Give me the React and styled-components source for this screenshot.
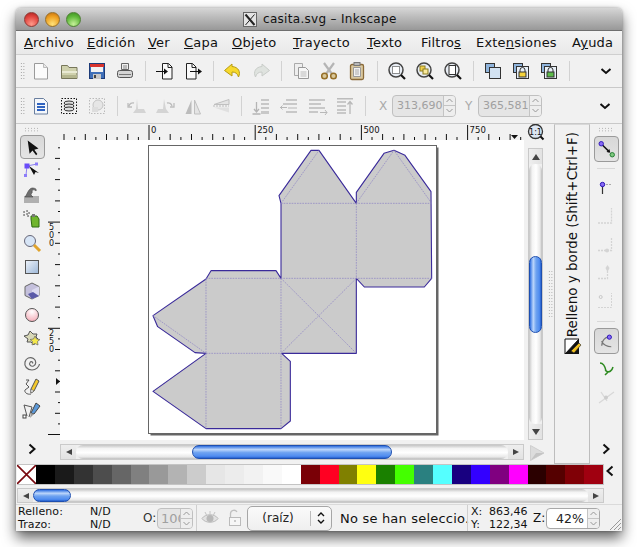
import React from 'react';
import styled, { createGlobalStyle } from 'styled-components';

const Global = createGlobalStyle`
  html, body { margin: 0; background: #fff; }
  body { font-family: "DejaVu Sans", sans-serif; color: #111; overflow: hidden; }
`;

const Page = styled.div`padding: 8px 0 0 16px; height: 547px; box-sizing: border-box;`;
const Win = styled.div`
  width: 606px; height: 523px; background: #f1f1f1; border-radius: 5px 5px 0 0;
  box-shadow: 0 7px 14px rgba(0,0,0,.62), 0 0 3px rgba(0,0,0,.35);
  display: flex; flex-direction: column; overflow: hidden;
`;
const TitleBar = styled.div`
  height: 23px; flex: none; position: relative; display: flex; align-items: center;
  background: linear-gradient(#d6d6d6, #bcbcbc 40%, #989898); border-bottom: 1px solid #6f6f6f; box-sizing: border-box;
`;
const Lights = styled.div`display: flex; gap: 6px; margin-left: 8px;`;
const Light = styled.div`
  width: 15px; height: 15px; border-radius: 50%;
  border: 1px solid ${p => p.$edge}; box-sizing: border-box;
  background: radial-gradient(circle at 50% 85%, ${p => p.$glow}, ${p => p.$c} 60%, ${p => p.$dark});
`;
const TitleBox = styled.div`
  display: flex; align-items: center; gap: 6px; margin-left: 162px;
  font-size: 12px; letter-spacing: .3px; color: #111;
`;
const MenuBar = styled.div`
  height: 24px; flex: none; box-sizing: border-box; display: flex; align-items: center; padding-left: 8px;
  font-size: 13px; letter-spacing: .2px; background: linear-gradient(#f4f4f4, #e9e9e9); border-bottom: 1px solid #cfcfcf;
`;
const MenuItem = styled.span`white-space: nowrap; width: ${p => p.$w}px; flex: none;`;
const Ul = styled.span`text-decoration: underline;`;
const ToolRow = styled.div`
  height: ${p => p.$h}px; flex: none; box-sizing: border-box; display: flex; align-items: center;
  border-bottom: 1px solid #c9c9c9; position: relative;
`;
const Grip = styled.div`
  width: 5px; height: 18px; margin: 0 2px 0 4px;
  background-image: radial-gradient(#999 .6px, transparent .8px); background-size: 2.6px 3px; flex: none;
`;
const TBtn = styled.div`
  width: 28px; height: 26px; display: flex; align-items: center; justify-content: center; flex: none;
`;
const VSep = styled.div`width: 1px; height: 20px; background: #d2d2d2; margin: 0 5px 0 6px; flex: none;`;
const Chevron = styled.div`
  position: absolute; right: ${p => p.$r}px; top: 50%; transform: translateY(-50%); display: flex;
`;
const FieldLabel = styled.span`font-size: 12px; color: #aaa; width: ${p => p.$w}px; flex: none; margin-left: ${p => p.$ml || 0}px;`;
const Spin = styled.div`
  height: ${p => p.$h}px; width: ${p => p.$w}px; box-sizing: border-box; flex: none; display: flex;
  border: 1px solid ${p => p.$on ? '#a8a8a8' : '#c0c0c0'}; border-radius: 4px; overflow: hidden;
  background: ${p => p.$on ? '#fff' : '#e5e5e5'};
  color: ${p => p.$on ? '#222' : '#a0a0a0'}; font-size: ${p => p.$fs}px;
`;
const SpinText = styled.div`flex: 1; min-width: 0; display: flex; align-items: center; padding-left: ${p => p.$pad}px; overflow: hidden; white-space: nowrap;`;
const SpinBtns = styled.div`width: 11px; flex: none; border-left: 1px solid #c4c4c4; display: flex; flex-direction: column; background: #eee;`;
const SpinBtn = styled.div`flex: 1; display: flex; align-items: center; justify-content: center; & + & { border-top: 1px solid #c4c4c4; }`;

const Main = styled.div`display: grid; grid-template-columns: 32px 506px 36px 32px; height: 340px; flex: none;`;
const SideBar = styled.div`display: flex; flex-direction: column; align-items: center; position: relative;`;
const TopGrip = styled.div`
  width: 16px; height: 5px; margin-top: 3px;
  background-image: radial-gradient(#aaa .6px, transparent .8px); background-size: 3px 2.6px; flex: none;
`;
const SideBtn = styled.div`
  width: 25px; height: ${p => p.$h || 24}px; flex: none; box-sizing: border-box; display: flex; align-items: center; justify-content: center;
  ${p => p.$active ? 'background: linear-gradient(#d8d8d8,#e4e4e4); border: 1px solid #9a9a9a; border-radius: 4px;' : ''}
`;
const HLine = styled.div`width: 18px; height: 1px; background: #d8d8d8; flex: none;`;
const Spacer = styled.div`flex: ${p => p.$h ? 'none' : 1}; height: ${p => p.$h ? p.$h + 'px' : 'auto'};`;
const Center = styled.div`display: grid; grid-template-columns: 12px 464px 30px; grid-template-rows: 16px 300px 24px;`;
const RulerCorner = styled.div``;
const ZoomCell = styled.div`display: flex; justify-content: flex-start; padding-left: 3px; align-items: center;`;
const Canvas = styled.div`background: #fff; overflow: hidden; display: flex;`;
const VCell = styled.div`padding: 8px 0 0 4px; display: flex; position: relative;`;
const VHandle = styled.div`
  position: absolute; right: 1px; top: 130px; width: 5px; height: 47px;
  background-image: radial-gradient(#aaa .6px, transparent .8px); background-size: 2.6px 3px;
`;
const ScrollV = styled.div`width: 15px; height: 292px; box-sizing: border-box; border: 1px solid #c9c9c9; display: flex; flex-direction: column; background: #efefef;`;
const ScrollH = styled.div`width: ${p => p.$w}px; height: ${p => p.$h || 16}px; box-sizing: border-box; border: 1px solid #cacaca; display: flex; background: #efefef; flex: none;`;
const Arrow = styled.div`width: 15px; height: 100%; flex: none; display: flex; align-items: center; justify-content: center; color: #444;
  background: linear-gradient(#eee,#e2e2e2);`;
const ArrowV = styled(Arrow)`width: 100%; height: 15px; background: linear-gradient(90deg,#eee,#e2e2e2);`;
const TrackH = styled.div`flex: 1; border-radius: 8px; display: flex; background: linear-gradient(#c4c4c4, #f4f4f4 25%, #fff 55%, #e8e8e8 85%, #bdbdbd);`;
const TrackV = styled.div`flex: 1; border-radius: 8px; display: flex; flex-direction: column; background: linear-gradient(90deg,#c4c4c4, #f4f4f4 25%, #fff 55%, #e8e8e8 85%, #bdbdbd);`;
const ThumbH = styled.div`
  width: ${p => p.$size}px; margin-left: ${p => p.$start}px; border-radius: 8px; border: 1px solid #1e4fb0; box-sizing: border-box;
  background: linear-gradient(#2f6fe0, #bcd6fb 30%, #6fa3f0 55%, #4f8cf0 85%, #2660cc);
`;
const ThumbV = styled.div`
  height: ${p => p.$size}px; margin-top: ${p => p.$start}px; border-radius: 8px; border: 1px solid #1e4fb0; box-sizing: border-box;
  background: linear-gradient(90deg,#2f6fe0, #bcd6fb 30%, #6fa3f0 55%, #4f8cf0 85%, #2660cc);
`;
const HCell = styled.div`grid-column: 2 / 4; display: flex; align-items: flex-start; padding-top: 4px; gap: 5px;`;
const LeftFill = styled.div``;
const Dock = styled.div`
  border-left: 1px solid #bdbdbd; border-right: 1px solid #bdbdbd; border-top: 1px solid #d8d8d8; border-bottom: 1px solid #bdbdbd;
  display: flex; flex-direction: column; align-items: center; padding-top: 7px; box-sizing: border-box;
`;
const DockLabel = styled.div`
  writing-mode: vertical-rl; transform: rotate(180deg); font-size: 13.5px; white-space: nowrap; color: #111; line-height: 18px; margin-bottom: 1px;
`;
const DockIcon = styled.div`display: flex; margin-left: 2px;`;
const PaletteRow = styled.div`display: flex; height: 21px; flex: none; padding-left: 1px;`;
const Palette = styled.div`display: flex; width: 587px; height: 21px; box-sizing: border-box; border: 1px solid #c4c4c4; border-left: 0; flex: none;`;
const NoColor = styled.div`width: 19px; flex: none; display: flex;`;
const Swatch = styled.div`flex: 1; background: ${p => p.$c};`;
const PalScrollRow = styled.div`padding: 3px 0 1px 1px; flex: none; display: flex;`;
const Status = styled.div`flex: 1; display: flex; align-items: center; position: relative; border-top: 1px solid #dadada; font-size: 11px;`;
const FillBox = styled.div`width: 127px; flex: none; padding-left: 2px; display: grid; grid-template-columns: 72px auto; line-height: 13px; letter-spacing: .1px; box-sizing: border-box;`;
const OLabel = styled.span`font-size: 12px; color: #333; width: 14px; flex: none;`;
const StatusSep = styled.div`width: 1px; height: 26px; background: #cfcfcf; flex: none; margin: ${p => p.$m};`;
const IconSlot = styled.div`display: flex; margin-right: ${p => p.$mr}px; flex: none;`;
const Combo = styled.div`
  width: 85px; height: 25px; flex: none; box-sizing: border-box; border: 1px solid #a6a6a6; border-radius: 5px; display: flex; align-items: center;
  background: linear-gradient(#fafafa,#efefef); font-size: 12px; color: #222;
`;
const ComboText = styled.div`flex: 1; text-align: center; padding-right: 2px;`;
const ComboBtn = styled.div`width: 20px; height: 15px; border-left: 1px solid #bbb; display: flex; align-items: center; justify-content: center;`;
const StatusMsg = styled.div`font-size: 13px; letter-spacing: .2px; margin-left: 8px; width: 127px; white-space: nowrap; flex: none;`;
const Coords = styled.div`display: grid; grid-template-columns: 18px 42px; line-height: 13px; font-size: 11px; width: 60px; margin-left: 3px; flex: none;`;
const ZLabel = styled.span`font-size: 12px; margin-left: 2px; width: 13px; flex: none;`;
const ResizeGrip = styled.div`position: absolute; right: 1px; bottom: 1px; display: flex;`;

/* ---------- drawings ---------- */
const S = ({ children, w = 24, h = 24, vb, o }) => (
  <svg width={w} height={h} viewBox={vb || `0 0 ${w} ${h}`} opacity={o} style={{ display: 'block' }}>{children}</svg>
);
const I = {
  new: <S><path d="M5.5 4.500h9l4 4v11.500h-13z" fill="#fbfbfb" stroke="#9a9a9a" strokeLinejoin="round"/><path d="M14.500 4.500v4h4" fill="#e8e8e8" stroke="#bbb"/></S>,
  open: <S><path d="M4.500 6.500h6l1.500 2h8v11h-15.500z" fill="#cfd1ad" stroke="#77775a"/><rect x="5" y="12" width="15" height="2" fill="#e9ead3"/><rect x="5" y="16" width="15" height="3" fill="#b4b68e"/></S>,
  save: <S><rect x="4.500" y="4.500" width="15" height="15" fill="#3f6fb8" stroke="#1d3b78"/><rect x="5" y="5" width="14" height="3" fill="#d8332e"/><rect x="6" y="8" width="12" height="5" fill="#f2f2f2"/><rect x="8" y="15" width="8" height="5" fill="#c8c8c8"/><rect x="9" y="16" width="2" height="3" fill="#444"/></S>,
  print: <S><path d="M8.500 4.500h7v6h-7z" fill="#eee" stroke="#666"/><path d="M10 7h4M10 9h4" stroke="#888"/><rect x="4.500" y="11.500" width="15" height="7" rx="2" fill="#d4d4d4" stroke="#555"/><path d="M6 15.500h12" stroke="#777"/></S>,
  imp: <S><path d="M9.500 4.500h6l3.500 3.500v12h-9.500z" fill="#fafafa" stroke="#222"/><path d="M15 4.500v4h4" fill="none" stroke="#222"/><path d="M3 12.500h11" stroke="#111" strokeWidth="1.200"/><path d="M11 9.500l4 3-4 3z" fill="#111"/></S>,
  exp: <S><path d="M5.500 4.500h6l3.500 3.500v12h-9.500z" fill="#fafafa" stroke="#222"/><path d="M11 4.500v4h4" fill="none" stroke="#222"/><path d="M9 12.500h10" stroke="#111" strokeWidth="1.200"/><path d="M17 9.500l4 3-4 3z" fill="#111"/></S>,
  undo: <S><path d="M11 5L3.500 11.500 11 17v-4c3.500 0 5.500 1.500 6.500 5 2.500-5 0-10-6.500-10.500z" fill="#f7d92c" stroke="#b79c12" strokeLinejoin="round"/></S>,
  redo: <S><path d="M13 5l7.500 6.500L13 17v-4c-3.500 0-5.500 1.500-6.500 5-2.500-5 0-10 6.500-10.500z" fill="#dfe3df" stroke="#c8ccc8" strokeLinejoin="round"/></S>,
  dup: <S><path d="M5.500 4.500h8v12h-8z" fill="#eee" stroke="#aaa"/><path d="M9.500 8.500h7l3 3v8h-10z" fill="#f6f6f6" stroke="#999"/><path d="M11.500 13h6M11.500 15h6M11.500 17h6" stroke="#bbb"/></S>,
  cut: <S><path d="M7 4l8 11M17 4L9 15" stroke="#b5b5b5" strokeWidth="2.200"/><circle cx="7.500" cy="17" r="2.800" fill="#d9c89a" stroke="#96702a" strokeWidth="1.500"/><circle cx="16.500" cy="17" r="2.800" fill="#d9c89a" stroke="#96702a" strokeWidth="1.500"/></S>,
  paste: <S><rect x="5.500" y="5.500" width="13" height="15" rx="1.500" fill="#d9c8a0" stroke="#8a6a38" strokeWidth="1.300"/><rect x="9" y="3.500" width="6" height="3" fill="#b8b8b8" stroke="#777"/><path d="M8.500 8.500h7v9h-7z" fill="#f2f2f2" stroke="#999"/><path d="M10 11h4M10 13h4M10 15h4" stroke="#aaa"/></S>,
  zoomSel: <S><circle cx="11" cy="11" r="7" fill="#e9eef5" stroke="#444" strokeWidth="1.500"/><rect x="7.500" y="7.500" width="7" height="7" fill="#fff" stroke="#222" strokeDasharray="1 1"/><path d="M16 16l4 4" stroke="#111" strokeWidth="2.200"/></S>,
  zoomDraw: <S><circle cx="11" cy="11" r="7" fill="#e9eef5" stroke="#444" strokeWidth="1.500"/><rect x="7" y="7" width="5" height="5" fill="#f3d24c" stroke="#8a7a20"/><rect x="10" y="10" width="5" height="5" fill="#f9ea9c" stroke="#8a7a20"/><path d="M16 16l4 4" stroke="#111" strokeWidth="2.200"/></S>,
  zoomPage: <S><circle cx="11" cy="11" r="7" fill="#e9eef5" stroke="#444" strokeWidth="1.500"/><rect x="8" y="6.500" width="6.500" height="9" fill="#fff" stroke="#333"/><path d="M16 16l4 4" stroke="#111" strokeWidth="2.200"/></S>,
  layer: <S><rect x="4.500" y="4.500" width="9" height="9" fill="#8fb4dc" stroke="#333"/><rect x="8.500" y="8.500" width="11" height="11" fill="#d2e2f2" stroke="#333"/></S>,
  lockY: <S><rect x="4.500" y="4.500" width="9" height="9" fill="#8fb4dc" stroke="#333"/><rect x="7.500" y="7.500" width="12" height="12" fill="#e8f0f8" stroke="#333"/><path d="M11 13v-2a2.500 2.500 0 015 0v2" fill="none" stroke="#333"/><rect x="10" y="13" width="7" height="5" fill="#f4d23a" stroke="#333"/></S>,
  lockG: <S><rect x="4.500" y="4.500" width="9" height="9" fill="#8fb4dc" stroke="#333"/><rect x="7.500" y="7.500" width="12" height="12" fill="#e8f0f8" stroke="#333"/><path d="M11 13v-2a2.500 2.500 0 015 0v2" fill="none" stroke="#333"/><rect x="10" y="13" width="7" height="5" fill="#5dbb4a" stroke="#333"/></S>,
  chev: <S w={16} h={16}><path d="M3.500 6l4.500 4 4.500-4" fill="none" stroke="#111" strokeWidth="2"/></S>,
  chevR: <S w={12} h={14}><path d="M3.500 2.500l5 4.500-5 4.500" fill="none" stroke="#111" strokeWidth="2"/></S>,
  chevL: <S w={12} h={14}><path d="M8.500 2.500l-5 4.500 5 4.500" fill="none" stroke="#111" strokeWidth="2"/></S>,
  doc: <S><path d="M5.500 4.500h9l4 4v11.500h-13z" fill="#f4f7fb" stroke="#6a7f9f"/><path d="M8 9h8v2H8zM8 12h8v2H8zM8 15h8v2H8z" fill="#2f63c0"/></S>,
  selAll: <S><rect x="4.500" y="4.500" width="15" height="15" fill="none" stroke="#111" strokeDasharray="1.500 1.500"/><ellipse cx="12" cy="9" rx="5" ry="2" fill="#ddd" stroke="#333"/><ellipse cx="12" cy="12" rx="5" ry="2" fill="#ddd" stroke="#333"/><ellipse cx="12" cy="15" rx="5" ry="2" fill="#ddd" stroke="#333"/></S>,
  selFade: <S><rect x="4.500" y="4.500" width="15" height="15" fill="none" stroke="#bbb" strokeDasharray="1.500 1.500"/><circle cx="13" cy="11" r="5" fill="#e6e6e6" stroke="#c4c4c4"/><rect x="7" y="13" width="6" height="5" fill="#ddd"/></S>,
  rotL: <S><path d="M12 5l1 10h6l2 4H8l3-4z" fill="#d4d4d4"/><path d="M9 9a4 4 0 00-5 3M3 9v4h4" fill="none" stroke="#bdbdbd" strokeWidth="1.300"/></S>,
  rotR: <S><path d="M11 5l-1 10H5l-2 4h13l-3-4z" fill="#d4d4d4"/><path d="M14 9a4 4 0 015 3M21 9v4h-4" fill="none" stroke="#bdbdbd" strokeWidth="1.300"/></S>,
  flipH: <S><path d="M10.500 6v14H4.500z" fill="#bcbcbc"/><path d="M13.500 6v14h6z" fill="#e4e4e4" stroke="#c0c0c0"/></S>,
  flipV: <S><path d="M20 5.500v5H5z" fill="#e4e4e4" stroke="#c0c0c0"/><path d="M20 18.500v-5H5z" fill="#e0e0e0"/><path d="M4 12h16" stroke="#bbb" strokeDasharray="2 1"/></S>,
  al1: <S><path d="M3.500 20h8M7.500 8v10M5 15l2.500 3 2.500-3" fill="none" stroke="#b4b4b4" strokeWidth="1.300"/><path d="M12 5h8v2h-8zM12 9h8v2h-8zM12 13h8v2h-8zM12 17h8v3h-8z" fill="#c8c8c8"/></S>,
  al2: <S><path d="M9 5h11v2H9zM6 9h14v2H6zM9 17h11v2H9z" fill="#c8c8c8"/><path d="M3 13.500h7M5.500 11.500l-2 2 2 2" fill="none" stroke="#b8b8b8"/><path d="M11 13h9v2h-9z" fill="#d4d4d4"/></S>,
  al3: <S><path d="M4 5h16v2H4zM4 9h12v2H4zM4 13h16v2H4zM4 17h9v2H4z" fill="#c8c8c8"/><path d="M15 18.500h7M20 16l2 2.500-2 2.500" fill="none" stroke="#b8b8b8"/></S>,
  al4: <S><path d="M4 4h16v1.500H4z" fill="#bcbcbc"/><path d="M4 7h9v2H4zM4 11h9v2H4zM4 15h9v2H4zM4 18h9v2H4z" fill="#c8c8c8"/><path d="M17 20V8M14.500 10.500L17 7.500l2.500 3" fill="none" stroke="#b8b8b8" strokeWidth="1.300"/></S>,
  arrow: <S><path d="M8 4.500v14l3.500-3 3 5.500 1.500-1-2.500-5 4.500-.5z" fill="#111" transform="rotate(-8 12 12)"/></S>,
  node: <S><path d="M7 7l10-2M7 7l-1 9" stroke="#8d82f0" fill="none"/><rect x="4.500" y="4.500" width="5" height="5" fill="#6a4dfa"/><rect x="15" y="3.500" width="3" height="3" fill="#8d7dfa"/><rect x="4" y="15" width="3" height="3" fill="#8d7dfa"/><path d="M9 7l5 9 1.500-3 3.500 1z" fill="#111"/></S>,
  tweak: <S><rect x="4" y="13" width="15" height="7" fill="#b0b0b0"/><path d="M5 14c2-2 3-8 7-9 3 0 5 1 4 3-1-1-3-2-4 0 1 2-1 2-1 4l2 2z" fill="#6e6e6e" stroke="#444" strokeWidth=".6"/></S>,
  spray: <S><path d="M11 9h6l2 3v8h-7l-1-8z" fill="#6fb52c" stroke="#2f6a10"/><rect x="12" y="7" width="3" height="3" fill="#777"/><path d="M4 5h.1M7 4h.1M4 8h.1M7 7h.1M9 6h.1M8 9h.1" stroke="#333" strokeWidth="1.500" strokeLinecap="round"/></S>,
  zoomT: <S><circle cx="10" cy="10" r="5.500" fill="#d7e5f6" stroke="#667"/><path d="M14 14l6 6" stroke="#e0a32c" strokeWidth="3"/></S>,
  rect: <S><defs><linearGradient id="gr" x1="0" y1="0" x2="1" y2="1"><stop offset="0" stopColor="#eef3fa"/><stop offset="1" stopColor="#9cb7d8"/></linearGradient></defs><rect x="5.500" y="5.500" width="13" height="13" fill="url(#gr)" stroke="#555"/></S>,
  box: <S><path d="M12 4l7 3.500v9L12 20l-7-3.500v-9z" fill="#c4c0dc" stroke="#666"/><path d="M12 11l7-3.500v9L12 20z" fill="#dcdaf0"/><path d="M8 15l5-2 6 4-7 3z" fill="#5a5aa8"/></S>,
  circle: <S><defs><radialGradient id="gc" cx=".5" cy=".25" r=".8"><stop offset="0" stopColor="#fff"/><stop offset="1" stopColor="#f4a8b4"/></radialGradient></defs><circle cx="12" cy="12" r="6.500" fill="url(#gc)" stroke="#555"/></S>,
  star: <S><path d="M10 4l3 3 4 0-1 3 3 3-4 1-1 4-3-3-4 0 1-3-4-3 4-1z" fill="#d8d8b8" stroke="#555"/><path d="M15 9l1.500 3 3.500.5-2.500 2 .5 3.500-3-1.500-3 1.500.5-3.500-2.500-2 3.500-.5z" fill="#f4e84a" stroke="#666" strokeWidth=".7"/></S>,
  spiral: <S><path d="M12.500 12.500c1-1.500-1.500-2.500-2.500-1-1.500 2 1 4.500 3.500 3.500 3-1.500 3-5.500 0-7.500C10 5.500 6 7 5 11c-1 4 2 8 7 8 4 0 7-3 7.500-6" fill="none" stroke="#666" strokeWidth="1.200"/></S>,
  pencil: <S><path d="M6 5l3 0-3 4 3 3-4 3c-1 2 2 5 6 4" fill="none" stroke="#555"/><path d="M16 4l3 2-5 10-3 2 0-4z" fill="#f4c92c" stroke="#555"/><path d="M11 14l3 2-3 2z" fill="#fff" stroke="#555" strokeWidth=".6"/></S>,
  pen: <S><path d="M4 6l8 2-3 10M4 6l3 11" fill="none" stroke="#555"/><rect x="3" y="16" width="3" height="3" fill="#fff" stroke="#444"/><path d="M16 4l4 3-6 8-3-1z" fill="#5b98d8" stroke="#444"/><path d="M11 14l3 1-4 4z" fill="#999"/></S>,
  snap: <S><path d="M8 8l7 7" stroke="#111" strokeWidth="1.500"/><path d="M16 16l-4-1 3-3z" fill="#111"/><circle cx="6.500" cy="6.500" r="2.300" fill="#8a6cf5" stroke="#2b15b8"/><circle cx="18" cy="18" r="2.300" fill="#7ec87e" stroke="#1f7a2f"/></S>,
  snap2: <S><path d="M9 9.500h9" stroke="#aaa" strokeDasharray="2 1"/><path d="M8.500 11v8" stroke="#333" strokeWidth="1.200"/><circle cx="8.500" cy="9.500" r="2.200" fill="#8a6cf5" stroke="#2b15b8"/></S>,
  s3: <S><path d="M4 19h13.500V4" fill="none" stroke="#d4d4d4" strokeDasharray="2 1" strokeWidth="1.300"/></S>,
  s4: <S><path d="M4 16.500h13.500V4" fill="none" stroke="#d4d4d4" strokeDasharray="2 1" strokeWidth="1.300"/><circle cx="13" cy="16.500" r="2" fill="#d4d4d4"/></S>,
  s5: <S><path d="M4 16.500h9.500V6" fill="none" stroke="#d4d4d4" strokeDasharray="2 1" strokeWidth="1.300"/><path d="M13.500 3l2 3-2 4-2-4z" fill="#d4d4d4"/></S>,
  s6: <S><path d="M4 17.500h13.500V3" fill="none" stroke="#d4d4d4" strokeDasharray="2 1"/><circle cx="6.700" cy="7" r="1.500" fill="none" stroke="#c8c8c8"/></S>,
  curve: <S><path d="M7 17c0-6 4-9 7-9M7 12c1 4 6 6 10 6" fill="none" stroke="#777" strokeWidth="1.300"/><circle cx="15" cy="8" r="2.200" fill="#8a6cf5" stroke="#2b15b8"/></S>,
  green: <S><path d="M6 6c3 0 5 3 6 8 3 2 6 0 7-4M11 18l3-3-3-2" fill="none" stroke="#2d8a20" strokeWidth="1.500"/></S>,
  cross: <S><path d="M5 18L20 7M7 7l6 9" stroke="#d8d8d8" strokeWidth="1.300"/><circle cx="12" cy="12.500" r="2" fill="#ccc"/></S>,
  fillDock: <S w={18} h={18}><rect x="1" y="1" width="14" height="15" fill="#111"/><path d="M1 1h14L1 16z" fill="#fff" stroke="#111"/><path d="M7 13L15 5l2 2-7 8z" fill="#f0c020" stroke="#222" strokeWidth=".6"/></S>,
  x1to1: <S w={18} h={18}><circle cx="8.500" cy="8.500" r="7" fill="#dde6f2" stroke="#333" strokeWidth="1.300"/><path d="M13.500 13.500l3 3" stroke="#111" strokeWidth="2"/><text x="8.500" y="11.500" fontSize="8" textAnchor="middle" fontFamily="DejaVu Sans" fill="#111">1:1</text></S>,
  eye: <S w={20} h={18}><path d="M2 9.500c3-5 13-5 16 0-3 5-13 5-16 0z" fill="#e2e2e2" stroke="#bbb"/><circle cx="10" cy="9.500" r="3.500" fill="#b8b8b8"/><path d="M5 3l1.500 3M10 2v3M15 3l-1.500 3" stroke="#c4c4c4"/></S>,
  lock: <S w={16} h={20}><path d="M3.500 9V5.500a3.500 3.500 0 016.500-1.500" fill="none" stroke="#c0c0c0" strokeWidth="1.300"/><rect x="2.500" y="9.500" width="11" height="8" fill="#f6f6f6" stroke="#bbb"/><circle cx="8" cy="13" r="1" fill="#bbb"/></S>,
  stepper: <S w={10} h={16}><path d="M2 6l3-3 3 3M2 10l3 3 3-3" fill="none" stroke="#111" strokeWidth="1.400"/></S>,
  upS: <S w={9} h={7}><path d="M1.500 5l3-3 3 3" fill="none" stroke="#999"/></S>,
  dnS: <S w={9} h={7}><path d="M1.500 2l3 3 3-3" fill="none" stroke="#999"/></S>,
  triL: <S w={8} h={8}><path d="M7 1v6L1 4z" fill="#444"/></S>,
  triR: <S w={8} h={8}><path d="M1 1v6l6-3z" fill="#444"/></S>,
  triU: <S w={10} h={8}><path d="M1 7h8L5 1z" fill="#444"/></S>,
  triD: <S w={10} h={8}><path d="M1 1h8L5 7z" fill="#444"/></S>,
  corner: <S w={16} h={18}><path d="M1.500 1.500L15 9 1.500 16.500z" fill="#dcdcdc" stroke="#cfcfcf"/><path d="M2 16L15 9H7z" fill="#c4c4c4"/></S>,
  winX: <S w={14} h={15}><rect x=".5" y=".5" width="13" height="14" fill="#e4e4e4" stroke="#666"/><path d="M2.500 2.500l9 10.500" stroke="#222" strokeWidth="2"/><path d="M11.500 2.500l-9 10.500" stroke="#222"/></S>,
  noColor: <S w={19} h={19}><rect width="19" height="19" fill="#fff"/><path d="M0 0l19 19M19 0L0 19" stroke="#7a0a10" strokeWidth="1.600"/></S>,
  resize: <S w={12} h={12}><path d="M1 12L12 1M5 12l7-7M9 12l3-3" stroke="#999"/></S>,
};

const pitch = 10.62;
const TopRuler = () => {
  const ticks = [];
  for (let n = -8; n <= 35; n++) {
    const x = 89 + n * pitch;
    const major = n % 10 === 0;
    ticks.push(<path key={n} d={`M${x.toFixed(1)} ${major ? 1 : n % 2 === 0 ? 10 : 13}V16`} stroke="#111" strokeWidth="1"/>);
  }
  const labels = [[0, '0'], [10, '250'], [20, '500'], [30, '750']];
  return (
    <S w={464} h={16}>
      {ticks}
      {labels.map(([n, t]) => <text key={t} x={91 + n * pitch} y={9} fontSize="8.500" fontFamily="DejaVu Sans" fill="#111">{t}</text>)}
      <path d="M451 11h7l-3.500 4z" fill="#111"/>
    </S>
  );
};
const LeftRuler = () => {
  const ticks = [];
  for (let n = 0; n <= 28; n++) {
    const y = 294.5 - n * pitch;
    const major = n % 10 === 0;
    ticks.push(<path key={n} d={`M${major ? 0 : n % 2 === 0 ? 7 : 10} ${y.toFixed(1)}H12`} stroke="#111"/>);
  }
  const labels = [[10, ['2', '5', '0']], [20, ['5', '0', '0']]];
  return (
    <S w={12} h={300}>
      {ticks}
      {labels.map(([n, ds]) => ds.map((d, i) => (
        <text key={n + '-' + i} x={1} y={294.5 - n * pitch + 8 + i * 8} fontSize="8" fontFamily="DejaVu Sans" fill="#111">{d}</text>
      )))}
      <path d="M8 238v7l4-3.500z" fill="#111"/>
    </S>
  );
};

const Outline = "408,415 408,190 402,167 498,31 522,31 634,190 634,157 717,40 747,31 780,46 858,155 860,415 838,441 658,441 634,415 634,640 410,640 436,664 436,843 408,866 183,866 24,754 183,640 150,638 38,560 24,527 183,417 198,392 393,392";
const Folds = "M408 190H860M634 190V415M183 415H860M183 417V866M408 415V866M183 640H408M408 415L634 640M634 415L408 640M408 190L522 31M634 190L747 31L860 190M24 527L183 640";
const Drawing = () => (
  <svg width="464" height="300" viewBox="60 140 464 300" style={{ display: 'block' }}>
    <rect x="150.500" y="147.500" width="288" height="288" fill="#666"/>
    <rect x="148.500" y="145.500" width="288" height="288" fill="#fff" stroke="#666"/>
    <g transform="translate(145 140) scale(.33333)">
      <polygon points={Outline} fill="#cbcbcb" stroke="#3a2a9a" strokeWidth="3.300" strokeLinejoin="round"/>
      <path d={Folds} fill="none" stroke="#8f85c4" strokeWidth="2.200" strokeDasharray="5 3"/>
    </g>
  </svg>
);

const Hist = ['#000000','#1a1a1a','#333333','#4d4d4d','#666666','#808080','#999999','#b3b3b3','#cccccc','#e6e6e6','#ececec','#f2f2f2','#f9f9f9','#ffffff','#7a0006','#ff0022','#808000','#ffff10','#1a8000','#44ff00','#2a8080','#55ffff','#180080','#3300ff','#800080','#ff00ff','#2b0000','#550000','#800006','#a00010'];

const group = (names, Btn) => names.map(n => <Btn key={n}>{I[n]}</Btn>);

const SpinField = ({ text, w, h, on, fs = 11, pad = 4 }) => (
  <Spin $w={w} $h={h} $on={on} $fs={fs}>
    <SpinText $pad={pad}>{text}</SpinText>
    <SpinBtns><SpinBtn>{I.upS}</SpinBtn><SpinBtn>{I.dnS}</SpinBtn></SpinBtns>
  </Spin>
);

export default function App() {
  const menus = [
    ['', 'A', 'rchivo', 63], ['', 'E', 'dición', 61], ['', 'V', 'er', 36], ['', 'C', 'apa', 48], ['', 'O', 'bjeto', 61], ['', 'T', 'rayecto', 74],
    ['', 'T', 'exto', 54], ['Filtro', 's', '', 55], ['Exte', 'n', 'siones', 96], ['A', 'y', 'uda', 42],
  ];
  return (
    <Page>
      <Global />
      <Win>
        <TitleBar>
          <Lights>
            <Light $c="#e0443e" $glow="#ff9a8a" $dark="#a8201c" $edge="#8e3a36" />
            <Light $c="#ed9f20" $glow="#ffe27a" $dark="#c06a10" $edge="#96702a" />
            <Light $c="#5fb83a" $glow="#c6f09a" $dark="#3a8a20" $edge="#4e8034" />
          </Lights>
          <TitleBox>{I.winX}<span>casita.svg – Inkscape</span></TitleBox>
        </TitleBar>
        <MenuBar>
          {menus.map(([a, u, b, w], i) => <MenuItem key={i} $w={w}>{a}<Ul>{u}</Ul>{b}</MenuItem>)}
        </MenuBar>
        <ToolRow $h={33}>
          <Grip />
          {group(['new', 'open', 'save', 'print'], TBtn)}<VSep />
          {group(['imp', 'exp'], TBtn)}<VSep />
          {group(['undo', 'redo'], TBtn)}<VSep />
          {group(['dup', 'cut', 'paste'], TBtn)}<VSep />
          {group(['zoomSel', 'zoomDraw', 'zoomPage'], TBtn)}<VSep />
          {group(['layer', 'lockY', 'lockG'], TBtn)}<VSep />
          <Chevron $r={8}>{I.chev}</Chevron>
        </ToolRow>
        <ToolRow $h={36}>
          <Grip />
          {group(['doc', 'selAll', 'selFade'], TBtn)}<VSep />
          {group(['rotL', 'rotR', 'flipH', 'flipV'], TBtn)}<VSep />
          {group(['al1', 'al2', 'al3', 'al4'], TBtn)}<VSep />
          <FieldLabel $w={13} $ml={8}>X</FieldLabel>
          <SpinField text="313,690" w={64} h={22} />
          <FieldLabel $w={13} $ml={9}>Y</FieldLabel>
          <SpinField text="365,581" w={64} h={22} />
          <Chevron $r={9}>{I.chev}</Chevron>
        </ToolRow>
        <Main>
          <SideBar>
            <TopGrip />
            <Spacer $h={3} />
            <SideBtn $active $h={24}>{I.arrow}</SideBtn>
            {['node', 'tweak', 'spray', 'zoomT', 'rect', 'box', 'circle', 'star', 'spiral', 'pencil', 'pen'].map(n => <SideBtn key={n}>{I[n]}</SideBtn>)}
            <Spacer />
            <SideBtn $h={30}>{I.chevR}</SideBtn>
          </SideBar>
          <Center>
            <RulerCorner />
            <TopRuler />
            <ZoomCell>{I.x1to1}</ZoomCell>
            <LeftRuler />
            <Canvas><Drawing /></Canvas>
            <VCell>
              <ScrollV>
                <ArrowV>{I.triU}</ArrowV>
                <TrackV><ThumbV $start={92} $size={77} /></TrackV>
                <ArrowV>{I.triD}</ArrowV>
              </ScrollV>
              <VHandle />
            </VCell>
            <LeftFill />
            <HCell>
              <ScrollH $w={464}>
                <Arrow>{I.triL}</Arrow>
                <TrackH><ThumbH $start={116} $size={200} /></TrackH>
                <Arrow>{I.triR}</Arrow>
              </ScrollH>
              {I.corner}
            </HCell>
          </Center>
          <Dock>
            <DockLabel>Relleno y borde (Shift+Ctrl+F)</DockLabel>
            <DockIcon>{I.fillDock}</DockIcon>
          </Dock>
          <SideBar>
            <TopGrip />
            <Spacer $h={4} />
            <SideBtn $active $h={26}>{I.snap}</SideBtn>
            <Spacer $h={6} /><HLine /><Spacer $h={4} />
            <SideBtn $h={28}>{I.snap2}</SideBtn>
            <SideBtn $h={30}>{I.s3}</SideBtn>
            <SideBtn $h={29}>{I.s4}</SideBtn>
            <SideBtn $h={28}>{I.s5}</SideBtn>
            <SideBtn $h={28}>{I.s6}</SideBtn>
            <Spacer $h={5} /><HLine /><Spacer $h={6} />
            <SideBtn $active $h={26}>{I.curve}</SideBtn>
            <SideBtn $h={30}>{I.green}</SideBtn>
            <SideBtn $h={26}>{I.cross}</SideBtn>
            <Spacer />
            <SideBtn $h={30}>{I.chevR}</SideBtn>
          </SideBar>
        </Main>
        <PaletteRow>
          <Palette>
            <NoColor>{I.noColor}</NoColor>
            {Hist.map((c, i) => <Swatch key={i} $c={c} />)}
          </Palette>
          {I.chevL}
        </PaletteRow>
        <PalScrollRow>
          <ScrollH $w={587} $h={15}>
            <Arrow>{I.triL}</Arrow>
            <TrackH><ThumbH $start={0} $size={38} /></TrackH>
            <Arrow>{I.triR}</Arrow>
          </ScrollH>
        </PalScrollRow>
        <Status>
          <FillBox>
            <span>Relleno:</span><span>N/D</span>
            <span>Trazo:</span><span>N/D</span>
          </FillBox>
          <OLabel>O:</OLabel>
          <SpinField text="100" w={36} h={21} fs={13} pad={3} />
          <StatusSep $m="0 3px 0 3px" />
          <IconSlot $mr={7}>{I.eye}</IconSlot>
          <IconSlot $mr={4}>{I.lock}</IconSlot>
          <Combo><ComboText>(raíz)</ComboText><ComboBtn>{I.stepper}</ComboBtn></Combo>
          <StatusMsg>No se han seleccio.</StatusMsg>
          <StatusSep $m="0" />
          <Coords>
            <span>X:</span><span>863,46</span>
            <span>Y:</span><span>122,34</span>
          </Coords>
          <ZLabel>Z:</ZLabel>
          <SpinField text="42%" w={54} h={21} on fs={12.5} pad={9} />
          <ResizeGrip>{I.resize}</ResizeGrip>
        </Status>
      </Win>
    </Page>
  );
}
